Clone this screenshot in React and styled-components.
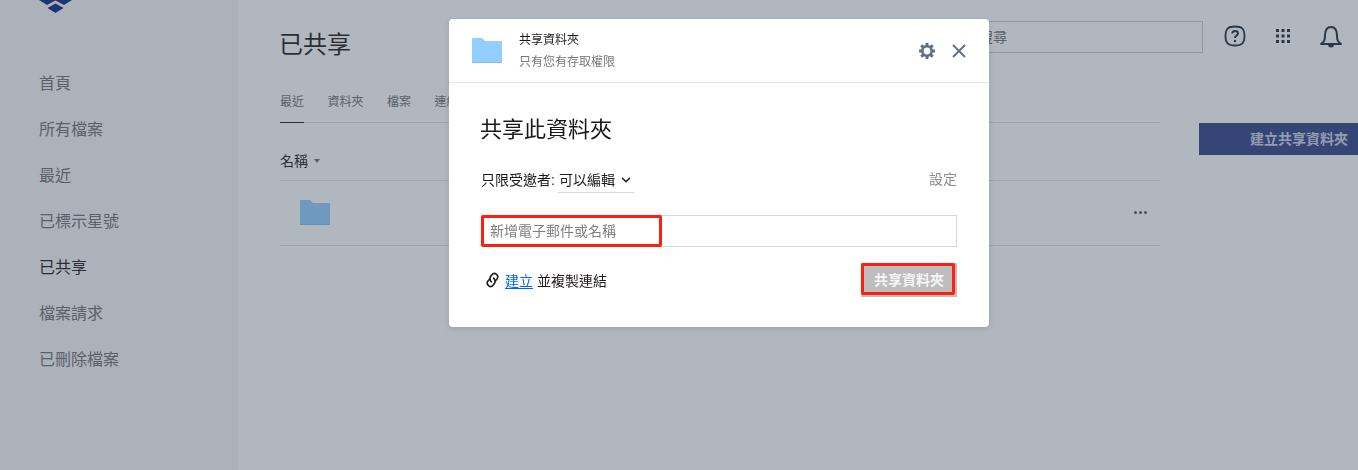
import React from "react";
import styled, { createGlobalStyle } from "styled-components";
import { ChevronDown } from "lucide-react";

const GlobalStyle = createGlobalStyle`
  html, body {
    margin: 0;
    height: 100%;
    overflow: hidden;
    background: #fff;
    font-family: "Liberation Sans", "Noto Sans CJK TC", sans-serif;
  }
`;

const Page = styled.div`
  display: flex;
  width: 1358px;
  height: 470px;
  overflow: hidden;
`;
const Sidebar = styled.aside`
  width: 238px;
  flex-shrink: 0;
  background: #f7f7f7;
  padding: 0 0 0 39px;
  box-sizing: border-box;
`;
const LogoBox = styled.div`
  height: 13px;
  margin-bottom: 59px;
  color: #0d2481;
  > svg {
    display: block;
  }
`;
const NavList = styled.nav`
  display: flex;
  flex-direction: column;
`;
const NavItem = styled.div`
  height: 46px;
  line-height: 24px;
  font-size: 16px;
  color: ${(p) => (p.$active ? "#1e1919" : "#6e7074")};
`;
const Main = styled.main`
  flex: 1;
  min-width: 0;
  padding-left: 42px;
`;
const TopBar = styled.header`
  display: flex;
  justify-content: space-between;
  height: 78px;
`;
const Title = styled.h1`
  margin: 29px 0 0 -1px;
  font-size: 24px;
  line-height: 32px;
  font-weight: 400;
  color: #1e1919;
`;
const Tools = styled.div`
  display: flex;
  align-items: flex-start;
  padding-top: 21px;
`;
const SearchBox = styled.div`
  width: 240px;
  height: 32px;
  box-sizing: border-box;
  border: 1px solid #c9ccd0;
  font-size: 14px;
  line-height: 30px;
  color: #6e7074;
  padding-left: 15px;
  margin-right: 18px;
`;
const ToolIcon = styled.span`
  display: flex;
  width: 28px;
  height: 30px;
  align-items: center;
  justify-content: center;
  margin-right: 20px;
  color: #1e2c3a;
  &:last-child {
    margin-right: 13px;
  }
`;
const Body = styled.div`
  display: flex;
`;
const Content = styled.section`
  width: 880px;
  flex-shrink: 0;
`;
const Tabs = styled.div`
  display: flex;
  gap: 23.5px;
  height: 45px;
  box-sizing: border-box;
  border-bottom: 1px solid #dfe1e4;
`;
const Tab = styled.div`
  height: 45px;
  box-sizing: border-box;
  padding-top: 15px;
  font-size: 12px;
  line-height: 18px;
  color: #6e7074;
  border-bottom: 1px solid ${(p) => (p.$active ? "#1e1919" : "transparent")};
`;
const SortRow = styled.div`
  display: flex;
  align-items: center;
  gap: 6px;
  height: 58px;
  box-sizing: border-box;
  padding-top: 16px;
  font-size: 14px;
  color: #1e1919;
  border-bottom: 1px solid #dfe1e4;
`;
const Caret = styled.span`
  width: 0;
  height: 0;
  margin-top: 2px;
  border: 3px solid transparent;
  border-top: 4px solid #637282;
  border-bottom: 0;
`;
const FileRow = styled.div`
  display: flex;
  align-items: center;
  justify-content: space-between;
  height: 65px;
  box-sizing: border-box;
  padding: 0 13px 1px 20px;
  border-bottom: 1px solid #dfe1e4;
`;
const Dots = styled.div`
  display: flex;
  gap: 2px;
  > span {
    width: 3px;
    height: 3px;
    border-radius: 50%;
    background: #475767;
  }
`;
const Side = styled.aside`
  flex: 1;
  padding: 45px 0 0 39px;
`;
const PrimaryButton = styled.div`
  height: 32px;
  width: 200px;
  box-sizing: border-box;
  padding-left: 51px;
  line-height: 32px;
  font-size: 14px;
  font-weight: 700;
  color: #ccd4e6;
  background: #2f4288;
`;
const Backdrop = styled.div`
  position: fixed;
  inset: 0;
  background: rgba(60, 75, 92, 0.4);
  padding: 19px 0 0 449px;
  box-sizing: border-box;
`;
const Modal = styled.div`
  width: 540px;
  height: 308px;
  background: #fff;
  border-radius: 4px;
  box-shadow: 0 2px 6px rgba(0, 0, 0, 0.12);
`;
const ModalHeader = styled.div`
  display: flex;
  align-items: center;
  height: 64px;
  box-sizing: border-box;
  padding: 0 21px 0 23px;
  border-bottom: 1px solid #e6e8ea;
`;
const HeaderText = styled.div`
  flex: 1;
  margin-left: 17px;
  padding-top: 1px;
`;
const HeaderTitle = styled.div`
  font-size: 12px;
  line-height: 18px;
  color: #1e1919;
  margin-bottom: 4px;
`;
const HeaderSub = styled.div`
  font-size: 12px;
  line-height: 18px;
  color: #777;
`;
const HeaderButton = styled.span`
  display: flex;
  margin-left: 14px;
  color: #5f7086;
`;
const ModalBody = styled.div`
  padding: 31px 32px 0;
`;
const Heading = styled.h2`
  margin: 0 0 24px -1px;
  font-size: 22px;
  line-height: 32px;
  font-weight: 400;
  color: #1e1919;
`;
const AccessRow = styled.div`
  display: flex;
  justify-content: space-between;
  align-items: flex-start;
  height: 45px;
`;
const AccessLabel = styled.div`
  display: flex;
  font-size: 14px;
  line-height: 20px;
  color: #1e1919;
`;
const AccessSelect = styled.div`
  display: flex;
  align-items: center;
  gap: 4px;
  width: 76px;
  height: 23px;
  box-sizing: border-box;
  margin-left: 3px;
  padding: 0 0 3px 1px;
  border-bottom: 1px solid #d8dadd;
`;
const SettingsLink = styled.div`
  font-size: 14px;
  line-height: 20px;
  color: #8c8c8c;
  margin-top: -1px;
`;
const InputBox = styled.div`
  position: relative;
  height: 32px;
  box-sizing: border-box;
  border: 1px solid #d6d8da;
  padding-left: 8px;
  font-size: 14px;
  line-height: 30px;
  color: #808080;
`;
const Highlight = styled.span`
  position: absolute;
  box-sizing: border-box;
  border: 3px solid #ff1f10;
  border-radius: 2px;
  pointer-events: none;
  top: ${(p) => p.$top}px;
  left: ${(p) => p.$left}px;
  width: ${(p) => p.$width}px;
  height: ${(p) => p.$height}px;
`;
const ActionRow = styled.div`
  display: flex;
  justify-content: space-between;
  align-items: center;
  margin-top: 16px;
`;
const LinkText = styled.div`
  display: flex;
  align-items: center;
  font-size: 14px;
  color: #1e1919;
  gap: 4px;
`;
const LinkGlyph = styled.svg`
  margin-left: 5px;
  color: #1e1919;
`;
const BlueLink = styled.a`
  color: #0061fe;
  text-decoration: underline;
  text-underline-offset: 2px;
  margin-left: 2px;
`;
const ShareButton = styled.div`
  position: relative;
  width: 96px;
  height: 34px;
  box-sizing: border-box;
  background: #bdbdbd;
  color: #f5f5f5;
  font-size: 14px;
  font-weight: 700;
  line-height: 34px;
  text-align: center;
`;

const FolderIcon = () => (
  <svg width="30" height="25" viewBox="0 0 30 25">
    <path d="M0 1a1 1 0 0 1 1-1h9l3 3h16a1 1 0 0 1 1 1v20a1 1 0 0 1-1 1H1a1 1 0 0 1-1-1z" fill="#92ceff" />
    <path d="M0 24h30v0a1 1 0 0 1-1 1H1a1 1 0 0 1-1-1z" fill="#7fbdf0" />
  </svg>
);

const NAV_ITEMS = ["首頁", "所有檔案", "最近", "已標示星號", "已共享", "檔案請求", "已刪除檔案"];
const TABS = ["最近", "資料夾", "檔案", "連結"];

export default function App() {
  return (
    <>
      <GlobalStyle />
      <Page>
        <Sidebar>
          <LogoBox>
            <svg width="33" height="13" viewBox="0 0 33 13" fill="currentColor">
              <polygon points="0,0 33,0 25,5 16.5,0.500 8,5" />
              <polygon points="16.500,3.500 24.500,8 16.500,13 8.500,8" />
            </svg>
          </LogoBox>
          <NavList>
            {NAV_ITEMS.map((item) => (
              <NavItem key={item} $active={item === "已共享"}>
                {item}
              </NavItem>
            ))}
          </NavList>
        </Sidebar>
        <Main>
          <TopBar>
            <Title>已共享</Title>
            <Tools>
              <SearchBox>搜尋</SearchBox>
              <ToolIcon>
                <svg width="24" height="24" viewBox="0 0 24 24" fill="none" stroke="currentColor" strokeWidth="1.8">
                  <path d="M12 2.500c7 0 9.500 2.500 9.500 9.500s-2.500 9.500-9.500 9.500S2.500 19 2.500 12 5 2.500 12 2.500z" />
                  <path d="M9.200 9.500c.2-1.700 1.300-2.500 2.900-2.500 1.700 0 2.800 1 2.800 2.400 0 2.300-2.900 2.200-2.900 4.600" strokeWidth="2" />
                  <circle cx="12" cy="17" r="1.200" fill="currentColor" stroke="none" />
                </svg>
              </ToolIcon>
              <ToolIcon>
                <svg width="14" height="14" viewBox="0 0 14 14" fill="currentColor">
                  {[0, 5.5, 11].flatMap((y) =>
                    [0, 5.5, 11].map((x) => <rect key={`${x}-${y}`} x={x} y={y} width="3" height="3" />)
                  )}
                </svg>
              </ToolIcon>
              <ToolIcon>
                <svg width="24" height="24" viewBox="0 0 24 24" fill="none" stroke="currentColor" strokeWidth="2">
                  <path d="M2 20c3-2 4-3.500 4-8.500C6 6 8.500 3 12 3s6 3 6 8.500c0 5 1 6.500 4 8.500z" strokeLinejoin="round" />
                  <path d="M9 20.500a3 3 0 0 0 6 0z" fill="currentColor" stroke="none" />
                </svg>
              </ToolIcon>
            </Tools>
          </TopBar>
          <Body>
            <Content>
              <Tabs>
                {TABS.map((tab) => (
                  <Tab key={tab} $active={tab === "最近"}>
                    {tab}
                  </Tab>
                ))}
              </Tabs>
              <SortRow>
                名稱
                <Caret />
              </SortRow>
              <FileRow>
                <FolderIcon />
                <Dots>
                  <span />
                  <span />
                  <span />
                </Dots>
              </FileRow>
            </Content>
            <Side>
              <PrimaryButton>建立共享資料夾</PrimaryButton>
            </Side>
          </Body>
        </Main>
      </Page>
      <Backdrop>
        <Modal>
          <ModalHeader>
            <FolderIcon />
            <HeaderText>
              <HeaderTitle>共享資料夾</HeaderTitle>
              <HeaderSub>只有您有存取權限</HeaderSub>
            </HeaderText>
            <HeaderButton>
              <svg width="18" height="18" viewBox="0 0 18 18" fill="none" stroke="currentColor">
                <circle cx="9" cy="9" r="4.700" strokeWidth="2.600" />
                <path d="M9 1v3M9 14v3M1 9h3M14 9h3M3.300 3.300l2.100 2.100M12.600 12.600l2.100 2.100M3.300 14.700l2.100-2.100M12.600 5.400l2.100-2.100" strokeWidth="3" />
              </svg>
            </HeaderButton>
            <HeaderButton>
              <svg width="18" height="18" viewBox="0 0 18 18" fill="none" stroke="currentColor" strokeWidth="1.800">
                <path d="M3 3l12 12M15 3L3 15" />
              </svg>
            </HeaderButton>
          </ModalHeader>
          <ModalBody>
            <Heading>共享此資料夾</Heading>
            <AccessRow>
              <AccessLabel>
                只限受邀者:
                <AccessSelect>
                  可以編輯
                  <ChevronDown size={14} strokeWidth={2.5} />
                </AccessSelect>
              </AccessLabel>
              <SettingsLink>設定</SettingsLink>
            </AccessRow>
            <InputBox>
              新增電子郵件或名稱
              <Highlight $top={-1} $left={-1} $width={181} $height={32} />
            </InputBox>
            <ActionRow>
              <LinkText>
                <LinkGlyph width="13" height="16" viewBox="0 0 13 16" fill="none" stroke="currentColor" strokeWidth="1.600" strokeLinecap="round">
                  <g transform="rotate(22 6.500 8)">
                    <path d="M6.200 10.200C4.800 9.600 3.400 8.400 3.300 6L3.900 3.600C4.400 1.600 6.200.8 7.800 1.200C9.800 1.800 10.800 3.600 10.300 5.400L9.600 7.600" />
                    <path d="M6.800 5.800C8.200 6.400 9.600 7.600 9.700 10L9.100 12.400C8.600 14.400 6.800 15.200 5.200 14.800C3.200 14.200 2.200 12.400 2.700 10.600L3.400 8.400" />
                  </g>
                </LinkGlyph>
                <BlueLink>建立</BlueLink>
                並複製連結
              </LinkText>
              <ShareButton>
                共享資料夾
                <Highlight $top={0} $left={0} $width={94} $height={32} />
              </ShareButton>
            </ActionRow>
          </ModalBody>
        </Modal>
      </Backdrop>
    </>
  );
}
